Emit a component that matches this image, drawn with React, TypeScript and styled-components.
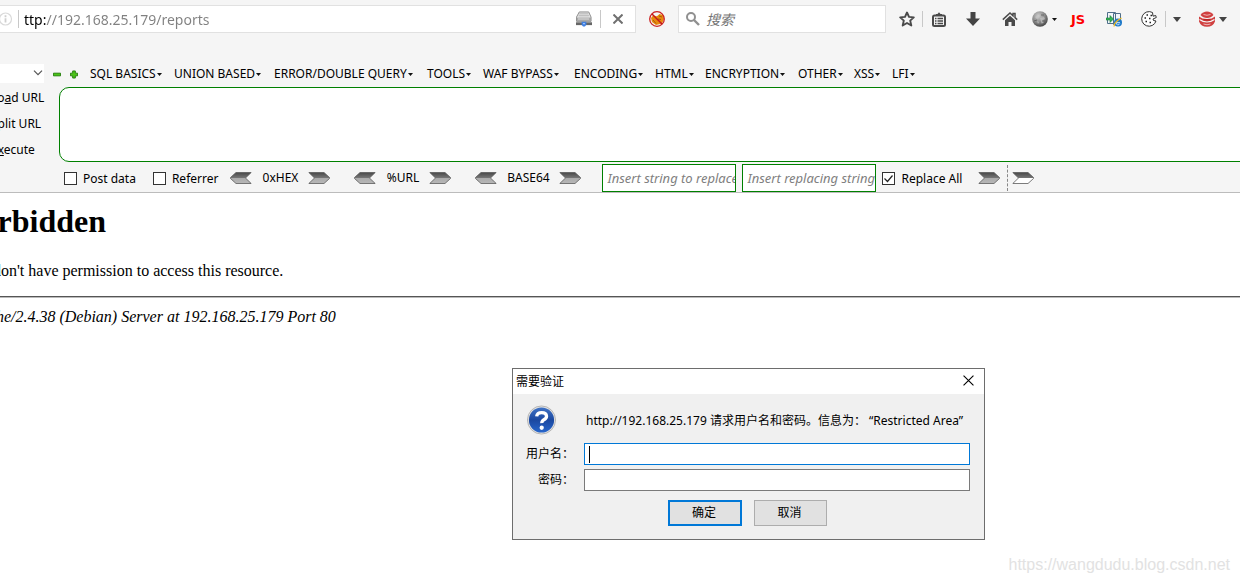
import React from 'react';
import styled, { createGlobalStyle } from 'styled-components';

const GlobalStyle = createGlobalStyle`
  * { box-sizing: border-box; }
  body {
    margin: 0;
    background: #fff;
    color: #000;
    font-family: "Noto Sans", "Noto Sans CJK SC", sans-serif;
    font-size: 12px;
  }
  button, input, select, textarea { font: inherit; color: inherit; margin: 0; }
`;

const Shell = styled.div`
  display: flex;
  flex-direction: column;
  min-height: 100vh;
  overflow: hidden;
`;

const Chrome = styled.header`
  background: #f5f5f5;
  border-bottom: 1px solid #bcbcbc;
`;

/* Navigation bar */

const NavBar = styled.div`
  display: flex;
  align-items: center;
  height: 64px;
  padding: 5px 2px 31px 0;
`;

const UrlBox = styled.div`
  display: flex;
  align-items: center;
  flex: 1;
  min-width: 0;
  height: 28px;
  background: #fff;
  border: 1px solid #e1e1e1;
  border-left: 0;
  padding-right: 11px;
`;

const InfoSlot = styled.span`
  display: flex;
  width: 19px;
  margin-left: -1px;
`;

const Divider = styled.span`
  flex: none;
  width: 1px;
  height: ${(p: { $tall?: boolean }) => (p.$tall ? 18 : 16)}px;
  background: #c8c8c8;
`;

const UrlInput = styled.input`
  flex: 1;
  min-width: 0;
  height: 26px;
  padding: 0 0 0 5px;
  border: 0;
  outline: 0;
  color: #808080;
  font-size: 14px;
  background: linear-gradient(to right, #000 27px, #808080 27px);
  background-clip: text;
  -webkit-background-clip: text;
  -webkit-text-fill-color: transparent;
`;

const PlainButton = styled.button`
  display: flex;
  align-items: center;
  justify-content: center;
  padding: 0;
  border: 0;
  background: transparent;
`;

const StopButton = styled(PlainButton)`
  width: 12px;
  height: 20px;
  margin-left: 11px;
`;

const DriveButton = styled(PlainButton)`
  width: 16px;
  margin-right: 8px;
`;

const BlockButton = styled(PlainButton)`
  width: 42px;
  height: 28px;
`;

const SearchBox = styled.label`
  display: flex;
  align-items: center;
  width: 208px;
  height: 28px;
  padding: 0 7px;
  gap: 6px;
  background: #fff;
  border: 1px solid #e1e1e1;
`;

const SearchInput = styled.input`
  flex: 1;
  min-width: 0;
  padding: 0;
  border: 0;
  outline: 0;
  font-size: 14px;
  font-style: italic;
  &::placeholder { color: #757575; opacity: 1; }
`;

const ToolStrip = styled.div`
  display: flex;
  align-items: center;
  padding-left: 6px;
`;

const ToolButton = styled(PlainButton)<{ $width?: number }>`
  width: ${(p) => p.$width ?? 36}px;
  height: 28px;
  gap: 4px;
`;

const JsMark = styled.span`
  color: #f00;
  font-family: "DejaVu Sans", sans-serif;
  font-size: 13px;
  font-weight: 700;
`;

/* HackBar */

const MenuRow = styled.nav`
  display: flex;
  align-items: center;
  height: 20px;
`;

const PresetSelect = styled.div`
  position: relative;
  width: 44px;
  height: 20px;
  margin-right: 9px;
  svg { position: absolute; right: 1px; top: 6px; pointer-events: none; }
`;

const Select = styled.select`
  display: block;
  width: 44px;
  height: 19px;
  border: 0;
  appearance: none;
  background: #fff;
`;

const SignButton = styled(PlainButton)`
  width: 8px;
  height: 12px;
  margin-right: 9px;
`;

const Menus = styled.div`
  display: grid;
  grid-template-columns: 84px 100px 153px 56px 91px 81px 50px 93px 56px 38px auto;
  margin-left: 3px;
`;

const MenuButton = styled(PlainButton)`
  justify-content: flex-start;
  gap: 1px;
  white-space: nowrap;
  line-height: 18px;
`;

const HackBody = styled.div`
  display: flex;
  height: 79px;
`;

const Actions = styled.div`
  display: flex;
  flex-direction: column;
  align-items: flex-start;
  width: 59px;
  padding-top: 5px;
  gap: 8px;
`;

const ActionButton = styled(PlainButton)`
  margin-left: -9px;
  line-height: 18px;
  white-space: nowrap;
`;

const UrlArea = styled.textarea`
  flex: 1;
  height: 75px;
  margin: 3px -12px 0 0;
  border: 1px solid #008000;
  border-radius: 10px;
  background: #fff;
  outline: 0;
  resize: none;
`;

const OptionRow = styled.div`
  display: flex;
  align-items: center;
  height: 29px;
  padding-left: 64px;
`;

const CheckLabel = styled.label<{ $gap: number }>`
  display: flex;
  align-items: center;
  gap: 6px;
  margin-right: ${(p) => p.$gap}px;
  padding-top: 2px;
  white-space: nowrap;
`;

const CheckBox = styled.input`
  appearance: none;
  width: 13px;
  height: 13px;
  border: 1px solid #333;
  background: #fff;
  &:checked {
    background: #fff url("data:image/svg+xml,%3Csvg xmlns='http://www.w3.org/2000/svg' viewBox='0 0 11 11'%3E%3Cpath d='M1.5 5.5l3 3 5-6' fill='none' stroke='%23222' stroke-width='1.2'/%3E%3C/svg%3E") center / 11px 11px;
  }
`;

const Codec = styled.div<{ $width: number; $gap: number }>`
  display: flex;
  align-items: center;
  justify-content: space-between;
  width: ${(p) => p.$width}px;
  margin-right: ${(p) => p.$gap}px;
`;

const ReplaceInput = styled.input`
  width: 134px;
  height: 28px;
  margin-right: 6px;
  padding: 0 0 0 4px;
  border: 1px solid #008000;
  background: #fff;
  outline: 0;
  font-size: 13px;
  font-style: italic;
  &::placeholder { color: #808080; opacity: 1; }
`;

const Dashes = styled.span`
  height: 26px;
  margin: 0 4px 0 7px;
  border-left: 1px dashed #888;
`;

/* Page */

const Page = styled.main`
  position: relative;
  flex: 1;
  font-family: "Liberation Serif", serif;
  font-size: 16px;
`;

const Document = styled.article`
  padding-top: 9px;
`;

const Title = styled.h1`
  margin: 0 0 21px -38px;
  font-size: 32px;
  line-height: 38px;
`;

const Paragraph = styled.p`
  margin: 0 0 15px -37px;
  line-height: 20px;
  white-space: nowrap;
`;

const Rule = styled.hr`
  height: 2px;
  margin: 0 0 9px;
  border: 0;
  border-top: 1px solid #555;
  border-bottom: 1px solid #bbb;
`;

const Signature = styled.address`
  margin-left: -37px;
  line-height: 20px;
  white-space: nowrap;
`;

const Watermark = styled.div`
  position: absolute;
  right: 10px;
  bottom: 8px;
  color: #e2e2e2;
  font-family: "Liberation Sans", sans-serif;
  font-size: 16px;
  line-height: 20px;
`;

/* Authentication dialog */

const Dialog = styled.section`
  position: absolute;
  left: 512px;
  top: 175px;
  width: 473px;
  border: 1px solid #6d6d6d;
  background: #f0f0f0;
  font-family: "Noto Sans", "Noto Sans CJK SC", sans-serif;
  font-size: 12px;
`;

const TitleBar = styled.header`
  display: flex;
  align-items: center;
  justify-content: space-between;
  height: 25px;
  padding: 0 10px 2px 3px;
  background: #fff;
`;

const AuthForm = styled.form`
  display: grid;
  grid-template-columns: 61px 1fr;
  column-gap: 10px;
  row-gap: 4px;
  padding: 10px 14px 13px 0;
`;

const IconCell = styled.div`
  padding-left: 13px;
  height: 35px;
`;

const Message = styled.p`
  margin: 0 0 0 2px;
  line-height: 34px;
  white-space: nowrap;
`;

const FieldLabel = styled.label`
  text-align: right;
  line-height: 22px;
  white-space: nowrap;
`;

const Field = styled.span<{ $active?: boolean }>`
  display: flex;
  align-items: center;
  height: 22px;
  padding-left: 4px;
  background: #fff;
  border: 1px solid ${(p) => (p.$active ? '#0078d7' : '#7a7a7a')};
`;

const Caret = styled.span`
  width: 1px;
  height: 17px;
  background: #000;
`;

const FieldInput = styled.input`
  flex: 1;
  height: 20px;
  padding: 0;
  border: 0;
  outline: 0;
  background: transparent;
`;

const Buttons = styled.div`
  grid-column: 1 / -1;
  display: flex;
  gap: 12px;
  margin-top: 5px;
  padding-left: 155px;
`;

const DialogButton = styled.button<{ $primary?: boolean }>`
  width: ${(p) => (p.$primary ? 74 : 73)}px;
  height: 26px;
  padding: 0 2px 2px 0;
  border: ${(p) => (p.$primary ? '2px solid #0078d7' : '1px solid #adadad')};
  background: #e1e1e1;
`;

const DropMark = ({ small }: { small?: boolean }) =>
  small ? (
    <svg width="5" height="3" viewBox="0 0 5 3" aria-hidden="true"><path d="M0 0h5L2.5 3z" fill="#111" /></svg>
  ) : (
    <svg width="8" height="5" viewBox="0 0 8 5" aria-hidden="true"><path d="M0 0h8L4 5z" fill="#444" /></svg>
  );

const Arrow = ({ left, hollow, name }: { left?: boolean; hollow?: boolean; name: string }) => {
  const id = `arrow-${name}`;
  return (
    <PlainButton type="button" aria-label={name}>
      <svg width="22" height="12" viewBox="0 0 22 12" aria-hidden="true">
        <defs>
          <linearGradient id={id} x1="0" y1="0" x2="0" y2="1">
            <stop offset="0" stopColor="#484848" />
            <stop offset=".5" stopColor="#777" />
            <stop offset=".5" stopColor={hollow ? '#fff' : '#aaa'} />
            <stop offset="1" stopColor={hollow ? '#fff' : '#b8b8b8'} />
          </linearGradient>
        </defs>
        <path
          d="M.8 .5H16L21.5 5.5V6.5L16 11.5H.8L6.5 6z"
          transform={left ? 'matrix(-1 0 0 1 22 0)' : undefined}
          fill={`url(#${id})`}
          stroke="#5c5c5c"
          strokeWidth=".8"
        />
      </svg>
    </PlainButton>
  );
};

const InfoIcon = () => (
  <svg width="14" height="14" viewBox="0 0 14 14" aria-hidden="true">
    <circle cx="6.5" cy="7" r="6" fill="none" stroke="#d9d9d9" strokeWidth="1.2" />
    <path d="M6.500 3.200v2M6.500 6.200v4.300" stroke="#cfcfcf" strokeWidth="1.8" />
  </svg>
);

const DriveIcon = () => (
  <svg width="17" height="16" viewBox="0 0 17 16" aria-hidden="true">
    <path d="M3.500 .5h10L16 6v4.500H.5V6z" fill="#e2e2e2" stroke="#8a8a8a" />
    <path d="M3.500 2.500h9.500M2.800 4.500h11" stroke="#b4b4b4" />
    <path d="M1 6.500h15v3.500H1z" fill="#a4a4a4" />
    <path d="M2 8h12" stroke="#e4e4e4" />
    <path d="M0 13h17" stroke="#666" strokeWidth="3" />
    <path d="M6 11h5v3l-1.500 2h-2L6 14z" fill="#3f7fe0" />
    <path d="M7.500 13h2" stroke="#bcd8ff" />
  </svg>
);

const BlockedIcon = () => (
  <svg width="16" height="16" viewBox="0 0 16 16" aria-hidden="true">
    <path d="M2 7l2-2.500 4 .8L10.500 3 14 4l1 4-2 4.500-6 1.500-4-3z" fill="#e8890c" />
    <path d="M4 9l3 3.500M10 5l3 1M9 8l3 .5" stroke="#a85a08" />
    <circle cx="8" cy="8" r="7.300" fill="none" stroke="#cc2222" strokeWidth="1.300" />
    <path d="M3 3l10 10" stroke="#c4161c" strokeWidth="1.400" />
  </svg>
);

const SearchIcon = () => (
  <svg width="14" height="14" viewBox="0 0 14 14" aria-hidden="true">
    <circle cx="5" cy="5" r="4" fill="none" stroke="#909090" strokeWidth="2" />
    <path d="M8 8l5 5" stroke="#909090" strokeWidth="2.400" />
  </svg>
);

const StarIcon = () => (
  <svg width="16" height="16" viewBox="0 0 16 16" aria-hidden="true">
    <path d="M8 1.500l2 4.400 4.800.5-3.600 3.200 1.100 4.900L8 12l-4.300 2.500 1.100-4.900L1.200 6.400 6 5.900z" fill="none" stroke="#4a4a4a" strokeWidth="1.900" strokeLinejoin="round" />
  </svg>
);

const ListIcon = () => (
  <svg width="14" height="15" viewBox="0 0 14 15" aria-hidden="true">
    <path d="M4 4V2h1.500L7 .3 8.500 2H10v2" fill="#4a4a4a" />
    <rect x="1" y="3.500" width="12" height="10.500" rx="1.500" fill="none" stroke="#4a4a4a" strokeWidth="2" />
    <path d="M3 6.500h1.500M5.500 6.500H11M3 9h1.500M5.500 9H11M3 11.500h1.500M5.500 11.500H11" stroke="#4a4a4a" strokeWidth="1.300" />
  </svg>
);

const DownIcon = () => (
  <svg width="14" height="14" viewBox="0 0 14 14" aria-hidden="true">
    <path d="M4.500 0h5v6.500H14L7 14 0 6.500h4.500z" fill="#444" />
  </svg>
);

const HomeIcon = () => (
  <svg width="16" height="14" viewBox="0 0 16 14" aria-hidden="true">
    <path d="M.8 7.600L8 1l3 2.700V1.500h2v4.100l2.200 2" fill="none" stroke="#4a4a4a" strokeWidth="1.500" />
    <path d="M3 8.200l5-4.500 5 4.500V14H9.500v-4h-3v4H3z" fill="#4a4a4a" />
  </svg>
);

const GlobeIcon = () => (
  <svg width="16" height="16" viewBox="0 0 16 16" aria-hidden="true">
    <defs>
      <radialGradient id="globe" cx=".4" cy=".3" r=".7">
        <stop offset="0" stopColor="#ccc" />
        <stop offset=".6" stopColor="#888" />
        <stop offset="1" stopColor="#484848" />
      </radialGradient>
    </defs>
    <circle cx="8" cy="8" r="7.800" fill="url(#globe)" />
    <path d="M3 6l3-2 1 3-2 1zM8 7l4-1 1 2-2 1 .5 3-2 .5zM5 10l2 1-1 2z" fill="#c4c4c4" opacity=".7" />
    <path d="M2 10l3-1M9 4h3M10 10h3" stroke="#666" />
  </svg>
);

const ImportIcon = () => (
  <svg width="16" height="16" viewBox="0 0 16 16" aria-hidden="true">
    <path d="M1.500 1.500h8v11h-8zM7.500 2.500h7v11h-7z" fill="#f2f6fa" stroke="#4f6f8a" />
    <path d="M0 7h4V4.500L7.500 8 4 11.500V9H0z" fill="#35b558" stroke="#1b7d38" strokeWidth=".6" />
    <circle cx="12" cy="11.500" r="4" fill="#1d78c8" />
    <path d="M10 11.700h4M10 11.700a2 2 0 0 0 3.800 1" stroke="#cfe8ff" fill="none" />
    <path d="M8 15.500Q8 11 15.500 7" stroke="#f0b91c" strokeWidth="1.200" fill="none" />
  </svg>
);

const CookieIcon = () => (
  <svg width="16" height="16" viewBox="0 0 16 16" aria-hidden="true">
    <path d="M11.500 1.500A7.300 7.300 0 1 0 15 10l-2.500-.5-.5-1.500 3.300-1.500-.6-2-2.700.7z" fill="#fff" stroke="#333" />
    <path d="M5.500 4H7M3.500 7H5M8 7.500h1.500M4.500 10.500H6M8.500 11.500H10M9.500 4.500H11" stroke="#222" strokeWidth="1.500" />
  </svg>
);

const RedIcon = () => (
  <svg width="16" height="16" viewBox="0 0 16 16" aria-hidden="true">
    <path d="M1.500 4A7.800 7.800 0 0 1 14.500 4Q12 7 8 7T1.500 4z" fill="#d04040" />
    <path d="M0 5.500Q3 8 8 8t8-2.500v5Q14 15.800 8 15.800T0 10.500z" fill="#d04040" />
    <path d="M.5 8.500Q4 11 8 11t7.500-2.500" fill="none" stroke="#f5f5f5" strokeWidth="1.200" />
    <path d="M4.500 3.500Q8 5 11.500 3.500M4.500 13Q8 14.500 11.500 13" fill="none" stroke="#efb4b4" />
    <path d="M4.500 8.800h7" stroke="#b52020" strokeWidth="1.200" />
  </svg>
);

const QuestionIcon = () => (
  <svg width="31" height="32" viewBox="0 0 32 32" aria-hidden="true">
    <defs>
      <linearGradient id="ask" x1="0" y1="0" x2="0" y2="1">
        <stop offset="0" stopColor="#3f72c5" />
        <stop offset=".5" stopColor="#1b48a0" />
        <stop offset="1" stopColor="#2766cc" />
      </linearGradient>
    </defs>
    <circle cx="16" cy="16" r="14.500" fill="#e2e2e2" stroke="#b4b4b4" />
    <circle cx="16" cy="16" r="13" fill="url(#ask)" />
    <path d="M11 12.300q.5-4 5.200-4t5 3.700q0 2.200-2.700 3.700-2.300 1.400-2.200 3.600" fill="none" stroke="#fff" strokeWidth="3.400" />
    <circle cx="16.200" cy="24" r="2.200" fill="#fff" />
  </svg>
);

const CloseIcon = ({ size, color, weight }: { size: number; color: string; weight: number }) => (
  <svg width={size} height={size} viewBox="0 0 10 10" aria-hidden="true">
    <path d="M.5 .5l9 9M9.500 .5l-9 9" stroke={color} strokeWidth={weight} />
  </svg>
);

const Sign = ({ plus }: { plus?: boolean }) => (
  <svg width="9" height="9" viewBox="0 0 9 9" aria-hidden="true">
    <path
      d={plus ? 'M3 .5h3V3h2.500v3H6v2.500H3V6H.5V3H3z' : 'M.5 3h8v3h-8z'}
      fill="#4cc417"
      stroke="#1f7a08"
      strokeLinejoin="round"
    />
  </svg>
);

const menus = [
  'SQL BASICS', 'UNION BASED', 'ERROR/DOUBLE QUERY', 'TOOLS', 'WAF BYPASS', 'ENCODING',
  'HTML', 'ENCRYPTION', 'OTHER', 'XSS', 'LFI',
];

const codecs = [
  { name: '0xHEX', width: 100, gap: 24 },
  { name: '%URL', width: 97, gap: 24 },
  { name: 'BASE64', width: 106, gap: 21 },
];

export default function App() {
  return (
    <Shell>
      <GlobalStyle />
      <Chrome>
        <NavBar>
          <UrlBox>
            <InfoSlot><InfoIcon /></InfoSlot>
            <Divider $tall />
            <UrlInput aria-label="Address" defaultValue="ttp://192.168.25.179/reports" />
            <DriveButton type="button" aria-label="Storage"><DriveIcon /></DriveButton>
            <Divider $tall />
            <StopButton type="button" aria-label="Stop"><CloseIcon size={10} color="#707070" weight={2} /></StopButton>
          </UrlBox>
          <BlockButton type="button" aria-label="Blocked"><BlockedIcon /></BlockButton>
          <SearchBox>
            <SearchIcon />
            <SearchInput aria-label="Search" placeholder="搜索" />
          </SearchBox>
          <ToolStrip>
            <ToolButton $width={30} aria-label="Bookmark"><StarIcon /></ToolButton>
            <Divider />
            <ToolButton $width={31} aria-label="Bookmarks list"><ListIcon /></ToolButton>
            <ToolButton $width={38} aria-label="Downloads"><DownIcon /></ToolButton>
            <ToolButton aria-label="Home"><HomeIcon /></ToolButton>
            <ToolButton $width={32} aria-label="Proxy"><GlobeIcon /><DropMark small /></ToolButton>
            <ToolButton aria-label="Toggle scripts"><JsMark>JS</JsMark></ToolButton>
            <ToolButton aria-label="Open in another browser"><ImportIcon /></ToolButton>
            <ToolButton $width={33} aria-label="Cookies"><CookieIcon /></ToolButton>
            <Divider />
            <ToolButton $width={22} aria-label="Cookie options"><DropMark /></ToolButton>
            <ToolButton $width={50} aria-label="Extension"><RedIcon /><DropMark /></ToolButton>
          </ToolStrip>
        </NavBar>

        <MenuRow>
          <PresetSelect>
            <Select aria-label="Preset"><option></option></Select>
            <svg width="10" height="6" viewBox="0 0 10 6" aria-hidden="true"><path d="M1 .7l4 4 4-4" fill="none" stroke="#555" strokeWidth="1.200" /></svg>
          </PresetSelect>
          <SignButton type="button" aria-label="Remove"><Sign /></SignButton>
          <SignButton type="button" aria-label="Add"><Sign plus /></SignButton>
          <Menus>
            {menus.map((name) => (
              <MenuButton type="button" key={name}>{name}<DropMark small /></MenuButton>
            ))}
          </Menus>
        </MenuRow>

        <HackBody>
          <Actions>
            <ActionButton type="button"><span>Lo<u>a</u>d URL</span></ActionButton>
            <ActionButton type="button"><span><u>S</u>plit URL</span></ActionButton>
            <ActionButton type="button"><span>E<u>x</u>ecute</span></ActionButton>
          </Actions>
          <UrlArea aria-label="URL" />
        </HackBody>

        <OptionRow>
          <CheckLabel $gap={17}><CheckBox type="checkbox" />Post data</CheckLabel>
          <CheckLabel $gap={12}><CheckBox type="checkbox" />Referrer</CheckLabel>
          {codecs.map((c) => (
            <Codec key={c.name} $width={c.width} $gap={c.gap}>
              <Arrow left name={`decode-${c.name.replace('%', '')}`} />
              <span>{c.name}</span>
              <Arrow name={`encode-${c.name.replace('%', '')}`} />
            </Codec>
          ))}
          <ReplaceInput aria-label="String to replace" placeholder="Insert string to replace" />
          <ReplaceInput aria-label="Replacing string" placeholder="Insert replacing string" />
          <CheckLabel $gap={16}><CheckBox type="checkbox" defaultChecked />Replace All</CheckLabel>
          <Arrow name="replace" />
          <Dashes />
          <Arrow hollow name="apply" />
        </OptionRow>
      </Chrome>

      <Page>
        <Document>
          <Title>Forbidden</Title>
          <Paragraph>You don't have permission to access this resource.</Paragraph>
          <Rule />
          <Signature>Apache/2.4.38 (Debian) Server at 192.168.25.179 Port 80</Signature>
        </Document>

        <Dialog role="dialog" aria-labelledby="auth-title">
          <TitleBar>
            <span id="auth-title">需要验证</span>
            <PlainButton type="button" aria-label="Close"><CloseIcon size={11} color="#000" weight={1} /></PlainButton>
          </TitleBar>
          <AuthForm onSubmit={(e) => e.preventDefault()}>
            <IconCell><QuestionIcon /></IconCell>
            <Message>http://192.168.25.179 请求用户名和密码。信息为： “Restricted Area”</Message>
            <FieldLabel htmlFor="user">用户名：</FieldLabel>
            <Field $active><Caret /><FieldInput id="user" /></Field>
            <FieldLabel htmlFor="password">密码：</FieldLabel>
            <Field><FieldInput id="password" type="password" /></Field>
            <Buttons>
              <DialogButton $primary>确定</DialogButton>
              <DialogButton type="button">取消</DialogButton>
            </Buttons>
          </AuthForm>
        </Dialog>

        <Watermark>https://wangdudu.blog.csdn.net</Watermark>
      </Page>
    </Shell>
  );
}
